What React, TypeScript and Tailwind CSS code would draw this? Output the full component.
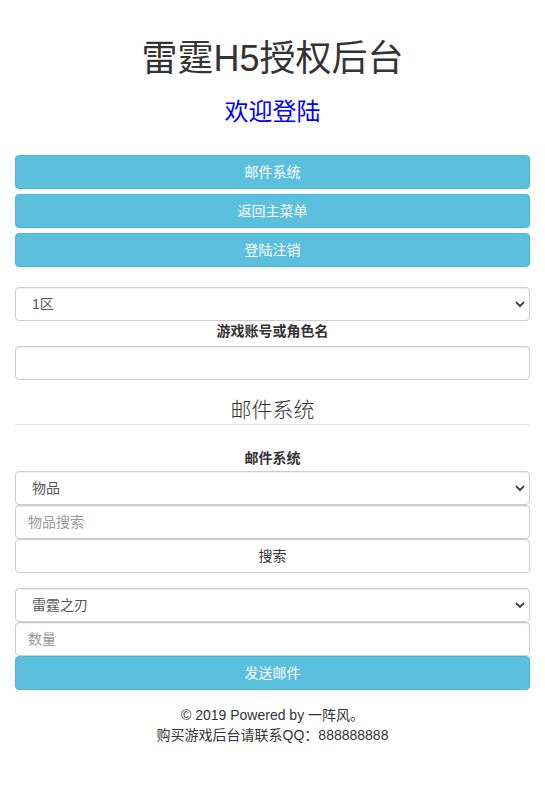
import type { ReactNode } from "react";

const font = { fontFamily: '"Liberation Sans", "Noto Sans CJK SC", sans-serif' };

function InfoButton({ children, className = "" }: { children: ReactNode; className?: string }) {
  return (
    <button
      type="button"
      className={`flex h-[34px] w-full items-center justify-center rounded-[4px] border border-[#46b8da] bg-[#5bc0de] text-[14px] text-white ${className}`}
    >
      {children}
    </button>
  );
}

function Select({ value, className = "" }: { value: string; className?: string }) {
  return (
    <div className={`relative h-[34px] w-full ${className}`}>
      <select
        defaultValue={value}
        className="h-full w-full appearance-none rounded-[4px] border border-[#ccc] bg-white pl-4 pr-8 text-[14px] text-[#555] shadow-[inset_0_1px_1px_rgba(0,0,0,0.075)] outline-none"
      >
        <option>{value}</option>
      </select>
      <svg
        className="pointer-events-none absolute right-[5px] top-1/2 h-[8px] w-[10px] -translate-y-1/2"
        viewBox="0 0 10 8"
        fill="none"
        stroke="#444"
        strokeWidth="1.8"
        strokeLinecap="round"
        strokeLinejoin="round"
      >
        <path d="M1.5 2.5 5 6 8.5 2.5" />
      </svg>
    </div>
  );
}

function TextInput({ placeholder = "" }: { placeholder?: string }) {
  return (
    <input
      type="text"
      placeholder={placeholder}
      className="block h-[34px] w-full rounded-[4px] border border-[#ccc] bg-white px-3 text-[14px] text-[#555] shadow-[inset_0_1px_1px_rgba(0,0,0,0.075)] outline-none placeholder:text-[#999]"
    />
  );
}

export default function App() {
  return (
    <div className="min-h-[811px] bg-white px-[15px] text-[14px] text-[#333]" style={font}>
      <h1 className="pt-[39px] text-center text-[36px] leading-[40px] font-normal">雷霆H5授权后台</h1>
      <h3 className="mt-[20px] text-center text-[24px] leading-[26px] font-normal text-[#0000ff]">欢迎登陆</h3>

      <div className="mt-[30px] flex flex-col gap-[5px]">
        <InfoButton>邮件系统</InfoButton>
        <InfoButton>返回主菜单</InfoButton>
        <InfoButton>登陆注销</InfoButton>
      </div>

      <Select value="1区" className="mt-[20px]" />
      <label className="block text-center text-[14px] leading-[20px] font-bold">游戏账号或角色名</label>
      <div className="mt-[5px]">
        <TextInput />
      </div>

      <div className="mt-[15px] border-b border-[#e5e5e5] text-center text-[21px] leading-[29px] font-light">
        邮件系统
      </div>

      <label className="mt-[23px] block text-center text-[14px] leading-[20px] font-bold">邮件系统</label>
      <div className="mt-[3px]">
        <Select value="物品" />
        <TextInput placeholder="物品搜索" />
        <button
          type="button"
          className="flex h-[34px] w-full items-center justify-center rounded-[4px] border border-[#ccc] bg-white text-[14px] text-[#333]"
        >
          搜索
        </button>
      </div>

      <div className="mt-[15px]">
        <Select value="雷霆之刃" />
        <TextInput placeholder="数量" />
        <InfoButton>发送邮件</InfoButton>
      </div>

      <footer className="mt-[15px] text-center text-[14px] leading-[20px] text-[#333]">
        <p>© 2019 Powered by 一阵风。</p>
        <p>购买游戏后台请联系QQ：888888888</p>
      </footer>
    </div>
  );
}
